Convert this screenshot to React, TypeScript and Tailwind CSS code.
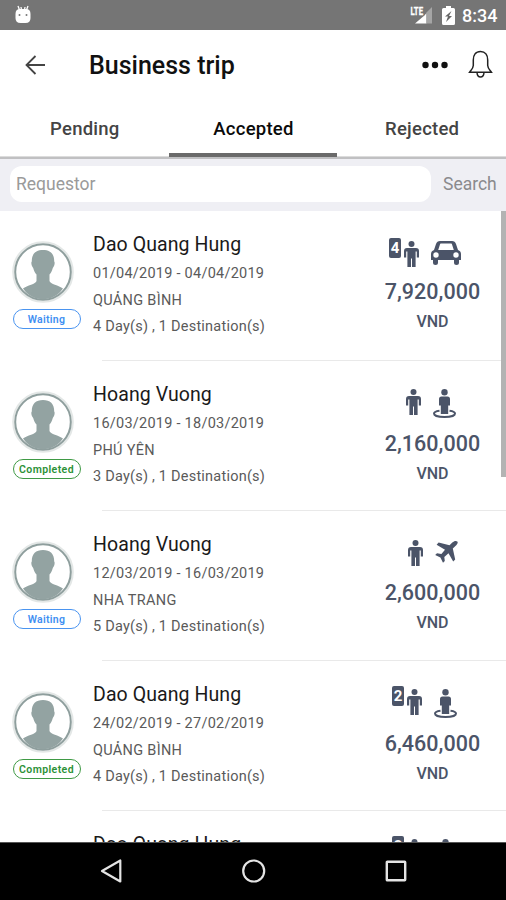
import React from "react";

type Mode = "car" | "street" | "plane";
type Trip = {
  name: string;
  dates: string;
  place: string;
  days: number;
  amount: string;
  status: "Waiting" | "Completed";
  people?: number;
  mode: Mode;
  iconPad: string;
  amountPad: string;
};

const trips: Trip[] = [
  { name: "Dao Quang Hung", dates: "01/04/2019 - 04/04/2019", place: "QUẢNG BÌNH", days: 4, amount: "7,920,000", status: "Waiting", people: 4, mode: "car", iconPad: "pl-[16px] pt-[27px]", amountPad: "mt-[10px]" },
  { name: "Hoang Vuong", dates: "16/03/2019 - 18/03/2019", place: "PHÚ YÊN", days: 3, amount: "2,160,000", status: "Completed", mode: "street", iconPad: "pl-[33px] pt-[28px]", amountPad: "mt-[12px]" },
  { name: "Hoang Vuong", dates: "12/03/2019 - 16/03/2019", place: "NHA TRANG", days: 5, amount: "2,600,000", status: "Waiting", mode: "plane", iconPad: "pl-[35px] pt-[29px]", amountPad: "mt-[11px]" },
  { name: "Dao Quang Hung", dates: "24/02/2019 - 27/02/2019", place: "QUẢNG BÌNH", days: 4, amount: "6,460,000", status: "Completed", people: 2, mode: "street", iconPad: "pl-[19px] pt-[25px]", amountPad: "mt-[12px]" },
];

function Person() {
  return (
    <svg width="15" height="26" viewBox="0 0 15 26" fill="#4b5468">
      <circle cx="7.500" cy="3" r="3" />
      <path d="M3 7h9Q15 7 15 10v6.500h-2.200V10.400h-1.200V26H8V17.500H7V26H3.400V10.400H2.200v6.100H0V10Q0 7 3 7z" />
    </svg>
  );
}

function ModeIcon({ mode }: { mode: Mode }) {
  if (mode === "car")
    return (
      <svg width="30" height="24" viewBox="0 0 30 24" className="ml-[12px] mt-[3px]">
        <path
          fill="#4b5468"
          fillRule="evenodd"
          d="M9 0h12q3 0 4 3l2 6q3 1 3 4v6h-2v2.500a2.500 2.500 0 0 1-5 0V19H7v2.500a2.500 2.500 0 0 1-5 0V19H0v-6q0-3 3-4l2-6Q6 0 9 0zM9.200 2.800 7.200 9h15.600l-2-6.200Q20.600 2.500 20 2.500H10q-.6 0-.8.3zM5 11.300a2.700 2.700 0 1 0 0 5.400a2.700 2.700 0 1 0 0-5.400zM25 11.300a2.700 2.700 0 1 0 0 5.400a2.700 2.700 0 1 0 0-5.400z"
        />
      </svg>
    );
  if (mode === "street")
    return (
      <svg width="23" height="29" viewBox="0 0 23 29" className="ml-[12px] mt-[3px]">
        <path fill="none" stroke="#4b5468" strokeWidth="2" d="M6.500 21.800C3 22.300 1 23.200 1 24.500 1 26.500 5 28 11.500 28S22 26.500 22 24.500c0-1.300-2-2.200-5.500-2.700" />
        <circle cx="11.500" cy="3.200" r="3.200" fill="#4b5468" />
        <path fill="#4b5468" d="M8.500 7.500h6q2.500 0 2.500 2.500v6.500h-1.800V25H7.800v-8.500H6V10q0-2.500 2.500-2.500z" />
      </svg>
    );
  return (
    <svg width="23" height="22" viewBox="0 0 23 22" className="ml-[12px] mt-[4px]">
      <path
        fill="#4b5468"
        d="M22.300.6c-1.200-1.100-3.400-.5-5 1l-2.800 2.700L3.600 1.600 1.600 3.800l8.400 5-3.600 4.100-4.400-.6L.2 14l5.200 2.600L8 21.800l1.800-1.700-.5-4.200 4.200-3.700L18.200 20.500l2-2-2.400-11 2.900-2.700c1.600-1.500 2.600-3.300 1.600-4.200z"
      />
    </svg>
  );
}

function Avatar() {
  return (
    <svg width="62" height="62" viewBox="0 0 62 62" className="ml-[12px]">
      <circle cx="31" cy="31" r="29.800" fill="#fff" stroke="#e3e7e6" strokeWidth="2" />
      <circle cx="31" cy="31" r="27.800" fill="#fff" stroke="#8e9e9d" strokeWidth="2" />
      <path
        fill="#93a3a2"
        d="M31 9c-7 0-11.400 3.800-11.200 11.500-.9.700-.5 4.300 1.400 6.500.8 3.200 1.700 4.700 3.300 6.500v6.500c-.5 3-9.500 4.500-13.500 7.500C15.700 54.500 23 58.300 31 58.300S46.300 54.500 51 47.500c-4-3-13-4.500-13.500-7.500v-6.500c1.600-1.800 2.500-3.300 3.300-6.500 1.900-2.200 2.300-5.800 1.400-6.500C42.400 12.800 38 9 31 9z"
      />
    </svg>
  );
}

function TripIcons({ people, mode }: { people?: number; mode: Mode }) {
  return (
    <>
      {people !== undefined && (
        <div className="mr-[3px] flex h-[20px] w-[12px] items-center justify-center rounded-[2px] bg-[#4b5468] text-[15px] font-bold leading-[18px] text-white">
          {people}
        </div>
      )}
      <div className={people !== undefined ? "pt-[3px]" : "pt-0"}>
        <Person />
      </div>
      <div className={people !== undefined ? "" : "-mt-[3px]"}>
        <ModeIcon mode={mode} />
      </div>
    </>
  );
}

function Row({ trip }: { trip: Trip }) {
  const waiting = trip.status === "Waiting";
  return (
    <div className="flex h-[150px] shrink-0">
      <div className="w-[93px] shrink-0 pt-[30px]">
        <Avatar />
        <div
          className={
            "ml-[12.500px] mt-[6px] flex h-[20px] w-[68px] items-center justify-center rounded-full border pt-px text-[10.500px] font-semibold " +
            (waiting ? "border-[#4a94f0] text-[#3f8ff2]" : "border-[#3f9a45] text-[#2c9136]")
          }
        >
          <span className={waiting ? "tracking-[0.300px]" : "tracking-[0.400px]"}>{trip.status}</span>
        </div>
      </div>
      <div className="flex w-[280px] shrink-0 flex-col whitespace-nowrap pt-[21px] text-[14.500px] text-[#5a5a5a]">
        <div className="h-[29px] text-[19.500px] leading-[26px] tracking-[0.080px] text-[#1a1a1a]">{trip.name}</div>
        <div className="h-[26px] leading-[26px] tracking-[0.250px]">{trip.dates}</div>
        <div className="h-[27px] leading-[27px] tracking-[0.300px]">{trip.place}</div>
        <div className="h-[26px] leading-[26px] tracking-[0.220px]">{trip.days} Day(s) , 1 Destination(s)</div>
      </div>
      <div className="w-[119px] shrink-0 text-center font-medium text-[#4b5468]">
        <div className={"flex h-[58px] items-start " + trip.iconPad}>
          <TripIcons people={trip.people} mode={trip.mode} />
        </div>
        <div className={"text-[21.500px] leading-[26px] tracking-[0.050px] " + trip.amountPad}>{trip.amount}</div>
        <div className="mt-[5px] text-[16px] leading-[24px]">VND</div>
      </div>
    </div>
  );
}

export default function App() {
  return (
    <div className="flex h-[900px] w-[506px] flex-col overflow-hidden bg-white font-['Roboto',sans-serif]">
      <div className="flex h-[30px] shrink-0 items-center bg-[#757575] text-white">
        <svg width="18" height="20" viewBox="0 0 18 20" className="ml-[14px]">
          <path d="M4 1l1.500 4M14 1l-1.500 4M7 2l.5 3M11 2l-.5 3" stroke="#fff" strokeWidth="1.300" />
          <path fill="#fff" d="M1.500 9Q1.500 4 6 4h6q4.500 0 4.500 5v4q0 5-5 5h-5q-5 0-5-5z" />
          <circle cx="5.500" cy="10" r="1" fill="#777" />
          <circle cx="12.500" cy="10" r="1" fill="#777" />
        </svg>
        <svg width="24" height="20" viewBox="0 0 24 20" className="ml-[378px]">
          <path fill="#fff" d="M5 18.500 12 12.500 14.500 10.500 16.500 8v10.500z" />
          <path fill="#a5a5a5" d="M16.500 7.500 22 2v16.500h-5.500z" />
          <text x="0.500" y="9.500" fill="#fff" stroke="#fff" strokeWidth="0.300" fontSize="11" fontWeight="700" textLength="12.500" lengthAdjust="spacingAndGlyphs">LTE</text>
        </svg>
        <svg width="13" height="19" viewBox="0 0 13 19" className="ml-[8px]">
          <path fill="#fff" d="M4 0h5v2h2.500Q13 2 13 3.500v14Q13 19 11.500 19h-10Q0 19 0 17.500v-14Q0 2 1.500 2H4z" />
          <path fill="#666" d="M9.500 5 3 10.500h3L4 16l6-6H7z" />
        </svg>
        <span className="ml-[7px] mt-[2px] text-[18px] font-medium leading-[20px]">8:34</span>
      </div>

      <div className="flex h-[71px] shrink-0 items-center">
        <svg width="20" height="20" viewBox="0 0 20 20" className="-mt-[2px] ml-[25px]" fill="none" stroke="#444" strokeWidth="1.800">
          <path d="M20 10H1.500M10.500 1 1.500 10l9 9" />
        </svg>
        <h1 className="ml-[44px] w-[333px] text-[25px] font-medium leading-[30px] text-[#111]">Business trip</h1>
        <svg width="26" height="8" viewBox="0 0 26 8" className="-mt-[2px]" fill="#111">
          <circle cx="3.500" cy="4" r="3.200" />
          <circle cx="13" cy="4" r="3.200" />
          <circle cx="22.500" cy="4" r="3.200" />
        </svg>
        <svg width="25" height="29" viewBox="0 0 25 29" className="-mt-[2px] ml-[20px]" fill="none" stroke="#222" strokeWidth="1.500">
          <path d="M12.500 1.500C7.500 1.500 5.300 5.500 5.300 10v5.500C5 19 3 20 1.500 22.300h22C22 20 20 19 19.700 15.500V10c0-4.500-2.200-8.500-7.200-8.500zM9 22.500q.3 4.500 3.500 4.500t3.500-4.500" />
        </svg>
      </div>

      <div className="grid h-[56px] shrink-0 grid-cols-3 text-center text-[18.500px] font-medium leading-[56px] tracking-[0.250px] text-[#444]">
        <div className="h-[56px] border-b border-[#dcdcdc] pl-[1px]">Pending</div>
        <div className="h-[56px] border-b-4 border-[#6a6a6a] pl-[1px] text-[#0a0a0a]">Accepted</div>
        <div className="h-[56px] border-b border-[#dcdcdc] pl-[1px]">Rejected</div>
      </div>

      <div className="flex h-[54px] shrink-0 items-center border-t-2 border-[#c0c0c2] bg-[#efeff4] text-[17.500px]">
        <div className="-mt-[2px] ml-[10px] flex h-[36px] w-[421px] items-center rounded-[12px] bg-white pl-[6px] pt-px text-[#9a9a9a]">Requestor</div>
        <div className="-mt-px ml-[12px] text-[#8a8a8d]">Search</div>
      </div>

      <div className="relative h-[631px] shrink-0 overflow-hidden">
        {trips.map((trip, i) => (
          <React.Fragment key={i}>
            <Row trip={trip} />
            <div className="-mt-px ml-[102px] h-px bg-[#e9e9e9]" />
          </React.Fragment>
        ))}
        <div className="flex h-[31px] overflow-hidden pl-[93px]">
          <div className="w-[280px] shrink-0 pt-[21px] text-[19.500px] leading-[26px] tracking-[0.080px] text-[#1a1a1a]">Dao Quang Hung</div>
          <div className="flex items-start pl-[19px] pt-[25px]">
            <TripIcons people={2} mode="street" />
          </div>
        </div>
        <div className="absolute right-0 top-0 h-[266px] w-[5px] bg-[#b3b3b3]" />
      </div>

      <div className="flex h-[58px] shrink-0 items-center border-t border-[#555] bg-black pb-[2px]">
        <svg width="22" height="24" viewBox="0 0 22 24" className="ml-[100px]" fill="none" stroke="#e4e4e4" strokeWidth="2.200" strokeLinejoin="round">
          <path d="M20.300 1.500v21L2 12z" />
        </svg>
        <svg width="24" height="24" viewBox="0 0 24 24" className="ml-[120px]" fill="none" stroke="#e4e4e4" strokeWidth="2.200">
          <circle cx="11.700" cy="12" r="10.500" />
        </svg>
        <svg width="22" height="22" viewBox="0 0 22 22" className="ml-[119px]" fill="none" stroke="#e4e4e4" strokeWidth="2.400">
          <rect x="1.800" y="1.800" width="18.400" height="18.400" rx="0.500" />
        </svg>
      </div>
    </div>
  );
}
